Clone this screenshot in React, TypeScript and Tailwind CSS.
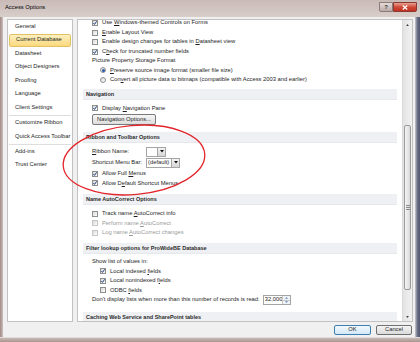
import React from "react";

function Cb({ checked = false, disabled = false }: { checked?: boolean; disabled?: boolean }) {
  return (
    <span
      className={
        "relative w-[6px] h-[6px] shrink-0 border bg-gradient-to-br from-[#d9d9d9] to-white " +
        (disabled ? "border-[#c6c6c6]" : "border-[#8e8f8f]")
      }
    >
      {checked && (
        <svg viewBox="0 0 6 6" className="absolute left-[-1px] top-[-1px] w-[6px] h-[6px]">
          <path d="M1.4 3.1 L2.5 4.4 L4.7 1.3" fill="none" stroke="#223f7c" strokeWidth="1" />
        </svg>
      )}
    </span>
  );
}

function Radio({ checked = false }: { checked?: boolean }) {
  return (
    <span className="w-[6px] h-[6px] shrink-0 rounded-full border border-[#8e8f8f] bg-gradient-to-br from-[#d9d9d9] to-white flex items-center justify-center">
      {checked && <span className="w-[3px] h-[3px] rounded-full bg-[#2a5aa6]" />}
    </span>
  );
}

function Row({
  children,
  h = "h-[9.6px]",
  sub = false,
  mt = "",
}: {
  children: React.ReactNode;
  h?: string;
  sub?: boolean;
  mt?: string;
}) {
  return (
    <div className={"flex items-center shrink-0 leading-none " + h + " " + mt + " " + (sub ? "pl-[22px] gap-[4px]" : "pl-[14px] gap-[4px]")}>
      {children}
    </div>
  );
}

function Header({ title, mt }: { title: string; mt: string }) {
  return (
    <div className={"mx-[5px] h-[11px] shrink-0 flex items-center pl-[3px] bg-[#eef0f3] border-b border-[#e6e8ec] font-bold text-[5.5px] text-[#2b2b2b] " + mt}>
      {title}
    </div>
  );
}

function Arrow() {
  return (
    <span className="w-[8px] h-full border-l border-[#a5a5a5] bg-gradient-to-b from-[#f4f4f4] to-[#d6d6d6] flex items-center justify-center">
      <svg viewBox="0 0 4 3" className="w-[4px] h-[3px]">
        <path d="M0 0 H4 L2 2.4 Z" fill="#111" />
      </svg>
    </span>
  );
}

const navItems1 = ["General", "Current Database", "Datasheet", "Object Designers", "Proofing", "Language", "Client Settings"];

export default function App() {
  return (
    <div className="relative w-[420px] h-[342px] overflow-hidden flex flex-col bg-[#c4b4b0] font-['Liberation_Sans',Arial,sans-serif] text-[5.8px] text-[#1e1e1e]">
      {/* Title bar */}
      <div className="h-[17px] shrink-0 flex items-start bg-gradient-to-b from-[#c9bab6] to-[#d8ceca]">
        <span className="ml-[5px] mt-[5px] leading-none text-[5.8px] text-black">Access Options</span>
        <div className="ml-auto mt-[2px] mr-[3px] flex">
          <span className="w-[14px] h-[10px] rounded-bl-[2px] border border-[#8a7b78] bg-gradient-to-b from-[#e6dcda] to-[#b9aaa7] flex items-center justify-center text-[6px] leading-none text-[#3a3a3a] font-bold">
            ?
          </span>
          <span className="w-[24px] h-[10px] rounded-br-[2px] border border-[#8a3a30] bg-gradient-to-b from-[#e6a093] via-[#d04a38] to-[#c0301f] flex items-center justify-center">
            <svg viewBox="0 0 6 5" className="w-[6px] h-[5px]">
              <path d="M0.8 0.6 L5.2 4.4 M5.2 0.6 L0.8 4.4" stroke="#fff" strokeWidth="1.3" />
            </svg>
          </span>
        </div>
      </div>

      {/* Body */}
      <div className="flex-1 min-h-0 flex">
        <div className="w-[3px] shrink-0 bg-gradient-to-r from-[#9f8986] to-[#cdbfbc]" />
        <div className="flex-1 min-w-0 bg-[#f0f0f0] flex flex-col pt-[2px] pl-[4px] pr-[2px]">
          <div className="h-[303px] shrink-0 flex gap-[4px]">
            {/* Nav */}
            <div className="w-[66px] shrink-0 bg-white border border-[#c2c2c2] flex flex-col px-[1px]">
              {navItems1.map((t) => (
                <div
                  key={t}
                  className={
                    "h-[13.5px] shrink-0 flex items-center pl-[6px] leading-none " +
                    (t === "Current Database"
                      ? "bg-gradient-to-b from-[#fdf0bf] to-[#fbd97c] border border-[#e3c064] rounded-[2px] pl-[5px]"
                      : "")
                  }
                >
                  {t}
                </div>
              ))}
              <div className="h-[1.75px] shrink-0 flex items-center">
                <div className="w-full h-px bg-[#dedede]" />
              </div>
              {["Customize Ribbon", "Quick Access Toolbar"].map((t) => (
                <div key={t} className="h-[13.5px] shrink-0 flex items-center pl-[6px] leading-none">
                  {t}
                </div>
              ))}
              <div className="h-[1.75px] shrink-0 flex items-center">
                <div className="w-full h-px bg-[#dedede]" />
              </div>
              {["Add-ins", "Trust Center"].map((t) => (
                <div key={t} className="h-[13.5px] shrink-0 flex items-center pl-[6px] leading-none">
                  {t}
                </div>
              ))}
            </div>

            {/* Content */}
            <div className="flex-1 min-w-0 bg-white border border-[#c2c2c2] flex">
              <div className="flex-1 min-w-0 overflow-hidden">
                <div className="flex flex-col mt-[-1.75px]">
                  <Row><Cb checked /><span>Use <u>W</u>indows-themed Controls on Forms</span></Row>
                  <Row><Cb /><span><u>E</u>nable Layout View</span></Row>
                  <Row><Cb /><span>Enable design changes for tables in <u>D</u>atasheet view</span></Row>
                  <Row><Cb checked /><span>C<u>h</u>eck for truncated number fields</span></Row>
                  <div className="h-[9.2px] shrink-0 flex items-center pl-[14px] leading-none">Picture Property Storage Format</div>
                  <Row sub h="h-[9.2px]"><Radio checked /><span><u>P</u>reserve source image format (smaller file size)</span></Row>
                  <Row sub h="h-[9.2px]"><Radio /><span>Con<u>v</u>ert all picture data to bitmaps (compatible with Access 2003 and earlier)</span></Row>

                  <Header title="Navigation" mt="mt-[4.75px]" />
                  <Row mt="mt-[3.75px]" h="h-[9.5px]"><Cb checked /><span>Display <u>N</u>avigation Pane</span></Row>
                  <div className="pl-[14px] mt-[0.75px] shrink-0 flex">
                    <span className="h-[11px] w-[64px] rounded-[2px] border border-[#7a7a7a] bg-gradient-to-b from-[#f6f6f6] to-[#dcdcdc] flex items-center justify-center leading-none">
                      Navigation Options...
                    </span>
                  </div>

                  <Header title="Ribbon and Toolbar Options" mt="mt-[7px]" />
                  <div className="h-[10px] mt-[4px] shrink-0 flex items-center pl-[14px] leading-none">
                    <span className="w-[54px]"><u>R</u>ibbon Name:</span>
                    <span className="h-[10px] w-[20px] border border-[#a5a5a5] bg-white flex justify-end">
                      <Arrow />
                    </span>
                  </div>
                  <div className="h-[10px] mt-[1px] shrink-0 flex items-center pl-[14px] leading-none">
                    <span className="w-[54px]">Shortcut Menu Bar:</span>
                    <span className="h-[10px] w-[34px] border border-[#a5a5a5] bg-white flex items-center">
                      <span className="flex-1 pl-[1px]">(default)</span>
                      <Arrow />
                    </span>
                  </div>
                  <Row mt="mt-[1.25px]" h="h-[9.5px]"><Cb checked /><span>Allow Full <u>M</u>enus</span></Row>
                  <Row h="h-[9.5px]"><Cb checked /><span>Allow D<u>e</u>fault Shortcut Menus</span></Row>

                  <Header title="Name AutoCorrect Options" mt="mt-[5.75px]" />
                  <Row mt="mt-[4.25px]" h="h-[9.5px]"><Cb /><span>Track name <u>A</u>utoCorrect info</span></Row>
                  <Row h="h-[9.5px]"><Cb disabled /><span className="text-[#9a9a9a]">Perform name <u>A</u>utoCorrect</span></Row>
                  <Row h="h-[9.5px]"><Cb disabled /><span className="text-[#9a9a9a]">Log name <u>A</u>utoCorrect changes</span></Row>

                  <Header title="Filter lookup options for ProWideBE Database" mt="mt-[5.25px]" />
                  <div className="h-[9.5px] mt-[3.25px] shrink-0 flex items-center pl-[14px] leading-none">Show list of values in:</div>
                  <Row sub h="h-[9.5px]"><Cb checked /><span>Local indexed <u>f</u>ields</span></Row>
                  <Row sub h="h-[9.5px]"><Cb checked /><span>Local nonindexed f<u>i</u>elds</span></Row>
                  <Row sub h="h-[9.5px]"><Cb /><span>ODBC <u>f</u>ields</span></Row>
                  <div className="h-[10px] shrink-0 flex items-center pl-[14px] leading-none gap-[3px]">
                    <span>Don't display lists when more than this number of records is read:</span>
                    <span className="h-[10px] w-[28px] border border-[#a5a5a5] bg-white flex items-center">
                      <span className="flex-1 pl-[1px]">32,000</span>
                      <span className="w-[8px] h-full border-l border-[#c8c8c8] flex flex-col">
                        <span className="flex-1 flex items-center justify-center bg-[#eef3f8] border-b border-[#c8c8c8]">
                          <svg viewBox="0 0 4 2" className="w-[3px] h-[2px]"><path d="M0 2 L2 0 L4 2Z" fill="#5a7aa6" /></svg>
                        </span>
                        <span className="flex-1 flex items-center justify-center bg-[#eef3f8]">
                          <svg viewBox="0 0 4 2" className="w-[3px] h-[2px]"><path d="M0 0 L4 0 L2 2Z" fill="#5a7aa6" /></svg>
                        </span>
                      </span>
                    </span>
                  </div>

                  <Header title="Caching Web Service and SharePoint tables" mt="mt-[6.75px]" />
                  <div className="h-[40px] shrink-0" />
                </div>
              </div>
              {/* Scrollbar */}
              <div className="w-[10px] shrink-0 border-l border-[#dadada] bg-gradient-to-r from-[#e3e3e3] to-[#f1f1f1] flex flex-col">
                <div className="h-[9px] shrink-0 flex items-center justify-center">
                  <svg viewBox="0 0 4 3" className="w-[3px] h-[2px]"><path d="M0 3 L2 0 L4 3Z" fill="#404040" /></svg>
                </div>
                <div className="h-[96px] shrink-0" />
                <div className="h-[165px] shrink-0 mx-[1px] rounded-[2px] border border-[#9a9a9a] bg-gradient-to-r from-[#f6f6f6] to-[#d9d9d9] flex flex-col items-center justify-center gap-[1px]">
                  <span className="w-[4px] h-px bg-[#8a8a8a]" />
                  <span className="w-[4px] h-px bg-[#8a8a8a]" />
                  <span className="w-[4px] h-px bg-[#8a8a8a]" />
                </div>
                <div className="flex-1" />
                <div className="h-[9px] shrink-0 flex items-center justify-center">
                  <svg viewBox="0 0 4 3" className="w-[3px] h-[2px]"><path d="M0 0 L4 0 L2 3Z" fill="#404040" /></svg>
                </div>
              </div>
            </div>
          </div>

          {/* Buttons */}
          <div className="flex-1 flex items-center justify-end gap-[5px] pr-[1px]">
            <span className="w-[37px] h-[10px] rounded-[2px] border border-[#3c7fb1] bg-gradient-to-b from-[#f2f9fd] to-[#d2e8f6] flex items-center justify-center leading-none">
              OK
            </span>
            <span className="w-[36px] h-[10px] rounded-[2px] border border-[#707070] bg-gradient-to-b from-[#f4f4f4] to-[#dadada] flex items-center justify-center leading-none">
              Cancel
            </span>
          </div>
        </div>
        <div className="w-[5px] shrink-0 bg-gradient-to-r from-[#c9c9cf] via-[#6a6e86] to-[#4f546c]" />
      </div>
      <div className="h-[5px] shrink-0 border-t border-[#e2dbd9] bg-gradient-to-b from-[#c9b9b5] to-[#a99592]" />

      {/* Red annotation ellipse */}
      <svg className="absolute left-0 top-0 w-[420px] h-[342px] pointer-events-none" viewBox="0 0 420 342">
        <ellipse cx="134" cy="160" rx="71" ry="34.5" transform="rotate(-5 134 160)" fill="none" stroke="#e3262c" strokeWidth="1.3" />
      </svg>
    </div>
  );
}
